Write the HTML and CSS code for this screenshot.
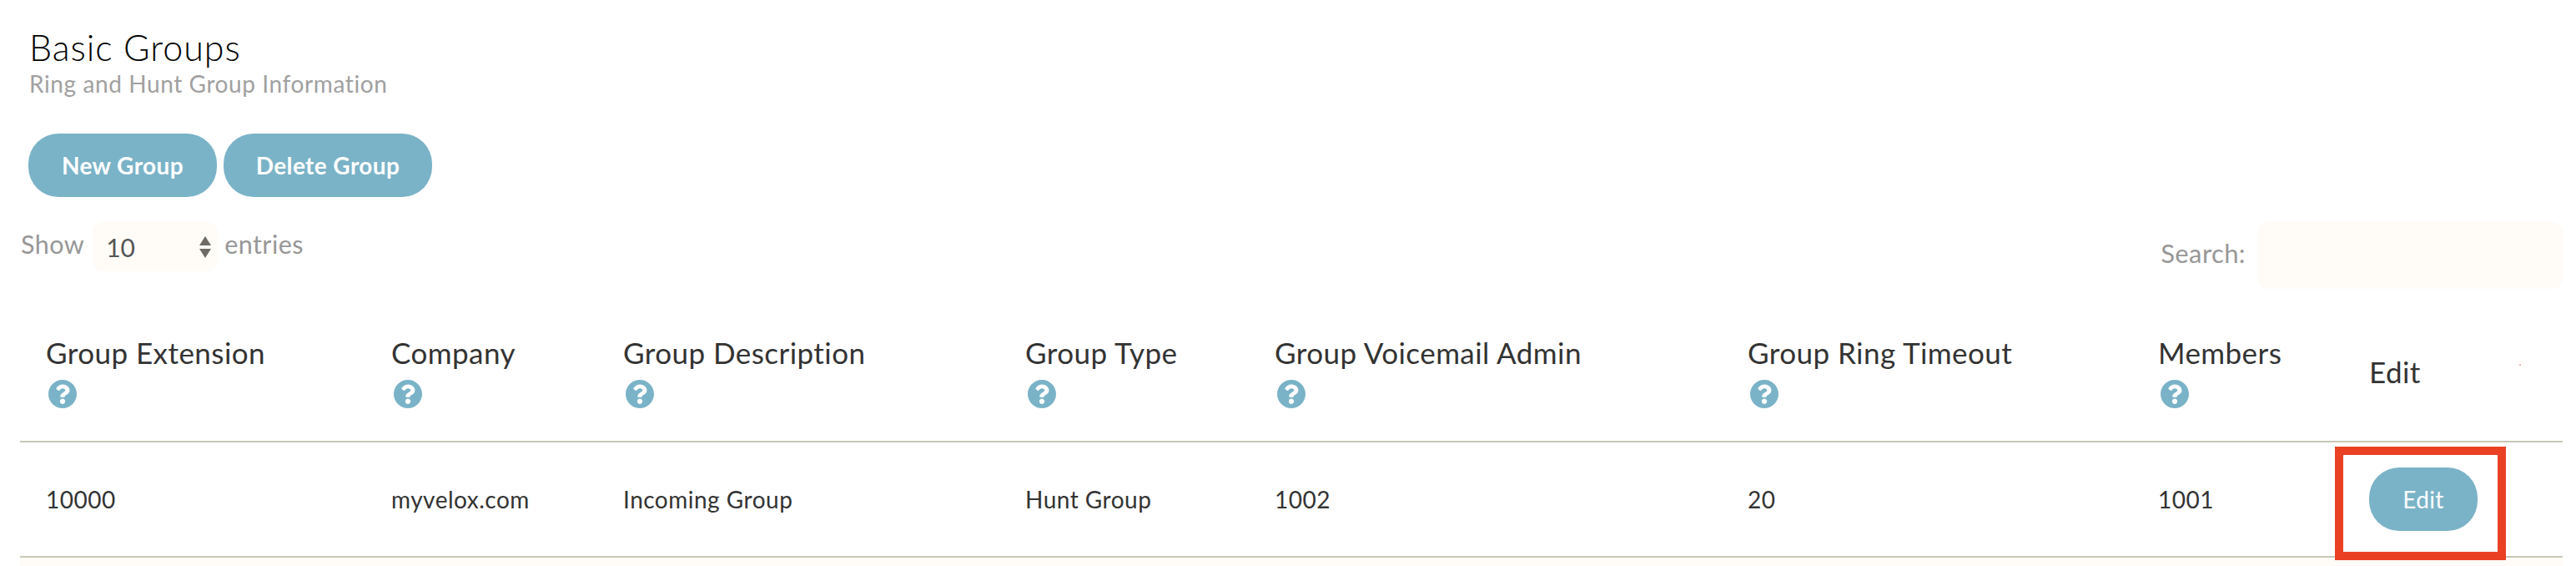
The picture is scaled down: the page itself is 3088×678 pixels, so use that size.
FILE: index.html
```html
<!DOCTYPE html>
<html lang="en">
<head>
<meta charset="utf-8">
<title>Basic Groups</title>
<link rel="stylesheet" href="styles.css">
</head>
<body>
<svg class="defs" width="0" height="0" aria-hidden="true">
  <symbol id="q" viewBox="8 8 496 496">
    <path d="M504 256c0 136.997-111.043 248-248 248S8 392.997 8 256C8 119.083 119.043 8 256 8s248 111.083 248 248zM262.655 90c-54.497 0-89.255 22.957-116.549 63.758-3.536 5.286-2.353 12.415 2.715 16.258l34.699 26.31c5.205 3.947 12.621 3.008 16.665-2.122 17.864-22.658 30.113-35.797 57.303-35.797 20.429 0 45.698 13.148 45.698 32.958 0 14.976-12.363 22.667-32.534 33.976C247.128 238.528 216 254.941 216 296v4c0 6.627 5.373 12 12 12h56c6.627 0 12-5.373 12-12v-1.333c0-28.462 83.186-29.647 83.186-106.667 0-58.002-60.165-102-116.531-102zM256 338c-25.365 0-46 20.635-46 46 0 25.364 20.635 46 46 46s46-20.636 46-46c0-25.365-20.635-46-46-46z"/>
  </symbol>
</svg>
<header class="head">
  <h1 class="title">Basic Groups</h1>
  <p class="subtitle">Ring and Hunt Group Information</p>
  <div class="actions">
    <button class="btn btn-new">New Group</button>
    <button class="btn btn-del">Delete Group</button>
  </div>
</header>
<div class="controls">
  <div class="length">
    <span>Show</span>
    <span class="select-wrap">
      <select class="select"><option>10</option><option>25</option><option>50</option></select>
      <svg class="arrows" viewBox="0 0 14 26"><path d="M7 0l7 11H0zM0 15h14L7 26z"/></svg>
    </span>
    <span>entries</span>
  </div>
  <label class="search"><span>Search:</span><input class="search-input" type="text"></label>
</div>
<table class="table">
  <colgroup>
    <col class="c1"><col class="c2"><col class="c3"><col class="c4"><col class="c5"><col class="c6"><col class="c7"><col class="c8">
  </colgroup>
  <thead>
    <tr>
      <th>Group Extension<svg class="help"><use href="#q"/></svg></th>
      <th>Company<svg class="help"><use href="#q"/></svg></th>
      <th>Group Description<svg class="help"><use href="#q"/></svg></th>
      <th>Group Type<svg class="help"><use href="#q"/></svg></th>
      <th>Group Voicemail Admin<svg class="help"><use href="#q"/></svg></th>
      <th>Group Ring Timeout<svg class="help"><use href="#q"/></svg></th>
      <th>Members<svg class="help"><use href="#q"/></svg></th>
      <th class="th-edit">Edit<i class="speck"></i></th>
    </tr>
  </thead>
  <tbody>
    <tr>
      <td>10000</td>
      <td>myvelox.com</td>
      <td>Incoming Group</td>
      <td>Hunt Group</td>
      <td>1002</td>
      <td>20</td>
      <td>1001</td>
      <td class="td-edit"><span class="highlight"></span><button class="btn btn-edit">Edit</button></td>
    </tr>
  </tbody>
</table>
<div class="foot"></div>
</body>
</html>
```
FILE: styles.css
```css
* { box-sizing: border-box; }
html, body { margin: 0; height: 678px; overflow: hidden; background: #fff; }
body { font-family: "Lato", "Liberation Sans", sans-serif; color: #222; }
.defs { position: absolute; }

.head { padding: 30px 0 0 35px; }
.title { margin: 0; font-size: 43px; line-height: 54px; font-weight: 300; color: #000; letter-spacing: .95px; }
.subtitle { margin: 0; font-size: 28px; line-height: 34px; font-weight: 400; color: #a0a0a0; letter-spacing: .6px; margin-top: -1px; }
.actions { display: flex; gap: 8px; margin: 43px 0 0 -1px; }

.btn { border: 0; background: #7ab3c7; color: #fff; font-family: inherit; font-weight: 700; font-size: 28px; height: 76px; border-radius: 36px; padding: 0; letter-spacing: .4px; }
.btn-new { width: 226px; }
.btn-del { width: 250px; }
.btn-edit { width: 130px; font-weight: 400; }

.controls { display: flex; justify-content: space-between; padding: 30px 16px 0 25px; }
.length { display: flex; align-items: flex-start; gap: 10px; font-size: 30.5px; color: #979797; height: 79px; line-height: 52px; letter-spacing: .45px; }
.select-wrap { position: relative; display: block; width: 150px; height: 59px; margin-right: -2px; }
.select { appearance: none; -webkit-appearance: none; display: block; width: 100%; height: 100%; border: 0; border-radius: 12px; background: #fffcf8; color: #555; font-family: inherit; font-size: 30px; padding: 0 0 0 16px; }
.arrows { position: absolute; right: 8px; top: 17px; width: 14px; height: 26px; fill: #6e6a64; pointer-events: none; }
.search { display: flex; align-items: flex-start; gap: 14px; font-size: 31px; color: #979797; line-height: 74px; letter-spacing: .4px; }
.search-input { display: block; width: 366px; height: 80px; border: 0; border-radius: 12px; background: #fffcf8; }

.table { table-layout: fixed; border-collapse: collapse; width: 3048px; margin: 0 0 0 24px; }
.c1 { width: 414px; } .c2 { width: 278px; } .c3 { width: 482px; } .c4 { width: 299px; }
.c5 { width: 567px; } .c6 { width: 492px; } .c7 { width: 253px; } .c8 { width: 263px; }
th, td { padding: 0 0 0 31px; text-align: left; white-space: nowrap; }
thead tr { height: 183px; border-bottom: 2px solid #c8c7b6; }
th { font-size: 35px; font-weight: 400; line-height: 44px; color: #333; position: relative; letter-spacing: .45px; padding-top: 14px; }
th .help { display: block; width: 34px; height: 34px; margin: 11px 0 0 3px; fill: #7ab3c7; }
.th-edit { position: relative; padding-top: 16px; }
.speck { position: absolute; right: 50px; top: 90px; width: 2px; height: 2px; background: #f3b5a6; }
tbody tr { height: 138px; border-bottom: 2px solid #c8c7b6; }
td { font-size: 28px; font-weight: 400; color: #333; letter-spacing: .5px; }
.td-edit { position: relative; }
.highlight { position: absolute; left: -10px; top: 5px; width: 205px; height: 136px; border: 10px solid #ea4125; }
.btn-edit { position: relative; display: block; }

.foot { height: 20px; margin: 0 16px 0 24px; background: #fffcf8; }
```
